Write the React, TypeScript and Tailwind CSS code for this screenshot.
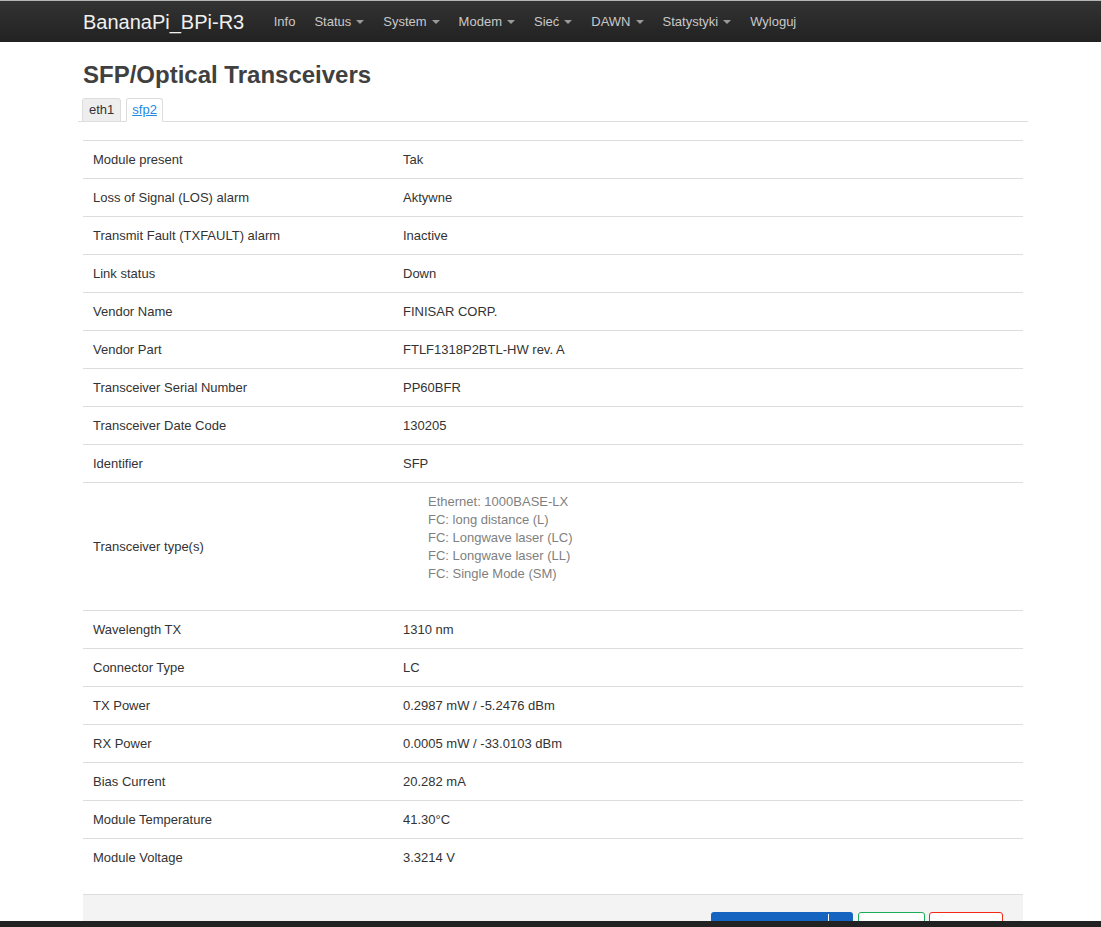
import React from "react";

const rows: [string, string][] = [
  ["Module present", "Tak"],
  ["Loss of Signal (LOS) alarm", "Aktywne"],
  ["Transmit Fault (TXFAULT) alarm", "Inactive"],
  ["Link status", "Down"],
  ["Vendor Name", "FINISAR CORP."],
  ["Vendor Part", "FTLF1318P2BTL-HW rev. A"],
  ["Transceiver Serial Number", "PP60BFR"],
  ["Transceiver Date Code", "130205"],
  ["Identifier", "SFP"],
];

const rows2: [string, string][] = [
  ["Wavelength TX", "1310 nm"],
  ["Connector Type", "LC"],
  ["TX Power", "0.2987 mW / -5.2476 dBm"],
  ["RX Power", "0.0005 mW / -33.0103 dBm"],
  ["Bias Current", "20.282 mA"],
  ["Module Temperature", "41.30°C"],
  ["Module Voltage", "3.3214 V"],
];

const types = [
  "Ethernet: 1000BASE-LX",
  "FC: long distance (L)",
  "FC: Longwave laser (LC)",
  "FC: Longwave laser (LL)",
  "FC: Single Mode (SM)",
];

const nav: [string, boolean][] = [
  ["Info", false],
  ["Status", true],
  ["System", true],
  ["Modem", true],
  ["Sieć", true],
  ["DAWN", true],
  ["Statystyki", true],
  ["Wyloguj", false],
];

function Caret() {
  return (
    <span className="ml-[5px] inline-block h-0 w-0 border-x-[4px] border-t-[4px] border-x-transparent border-t-[#9a9a9a] align-middle" />
  );
}

function Row({ label, value }: { label: string; value: string }) {
  return (
    <div className="flex h-[38px] items-center border-t border-[#dddddd]">
      <div className="w-[310px] pl-[10px]">{label}</div>
      <div className="pl-[10px]">{value}</div>
    </div>
  );
}

export default function App() {
  return (
    <div
      className="flex h-[927px] flex-col overflow-hidden bg-white text-[13px] text-[#333333]"
      style={{ fontFamily: '"Liberation Sans", Arial, sans-serif' }}
    >
      <header className="flex h-[42px] shrink-0 items-center border-t border-[#b5b5b5] bg-gradient-to-b from-[#333333] to-[#222222]">
        <div className="ml-[83px] mr-[20px] text-[20px] leading-none text-[#f0f0f0]">BananaPi_BPi-R3</div>
        <nav className="flex items-center">
          {nav.map(([n, c]) => (
            <div key={n} className="flex items-center px-[9.5px] text-[13px] text-[#c8c8c8]">
              {n}
              {c && <Caret />}
            </div>
          ))}
        </nav>
      </header>

      <main className="flex-1 overflow-hidden">
        <div className="ml-[78px] w-[950px]">
          <h2 className="mt-[20px] pl-[5px] text-[24px] font-bold leading-[26px] text-[#404040]">
            SFP/Optical Transceivers
          </h2>
          <div className="mt-[10px] flex border-b border-[#dddddd] pl-[4px]">
            <div className="-mb-px mr-[5px] flex h-[24px] items-center rounded-t-[3px] border border-[#dddddd] bg-[#eeeeee] px-[6px] text-[#333333]">
              eth1
            </div>
            <div className="-mb-px flex h-[24px] items-center rounded-t-[3px] border border-b-white border-[#dddddd] bg-white px-[5px] text-[#1e88e5] underline">
              sfp2
            </div>
          </div>

          <div className="mx-[5px] mt-[18px]">
            {rows.map(([l, v]) => (
              <Row key={l} label={l} value={v} />
            ))}
            <div className="flex h-[128px] items-center border-t border-[#dddddd]">
              <div className="w-[310px] pl-[10px]">Transceiver type(s)</div>
              <ul className="mb-[18px] pl-[35px] leading-[18px] text-[#7f7f7f]">
                {types.map((t) => (
                  <li key={t}>{t}</li>
                ))}
              </ul>
            </div>
            {rows2.map(([l, v]) => (
              <Row key={l} label={l} value={v} />
            ))}
          </div>

          <div className="mx-[5px] mt-[18px] flex justify-end border-t border-[#dddddd] bg-[#f3f3f3] pr-[20px] pt-[17px] pb-[10px]">
            <div className="flex h-[30px] w-[142px] rounded-[3px] bg-[#1565c0] text-[12px] font-bold text-white">
              <div className="flex w-[117px] items-center justify-center">Zapisz i zastosuj</div>
              <div className="my-[2px] w-px bg-white" />
              <div className="flex-1" />
            </div>
            <div className="ml-[5px] flex h-[30px] w-[67px] items-center justify-center rounded-[3px] border border-[#1aae56] bg-white text-[12px] font-bold text-[#1aae56]">
              Zapisz
            </div>
            <div className="ml-[4px] flex h-[30px] w-[74px] items-center justify-center rounded-[3px] border border-[#f42a14] bg-white text-[12px] font-bold text-[#f42a14]">
              Resetuj
            </div>
          </div>
        </div>
      </main>

      <div className="h-[6px] shrink-0 bg-[#222222]" />
    </div>
  );
}
